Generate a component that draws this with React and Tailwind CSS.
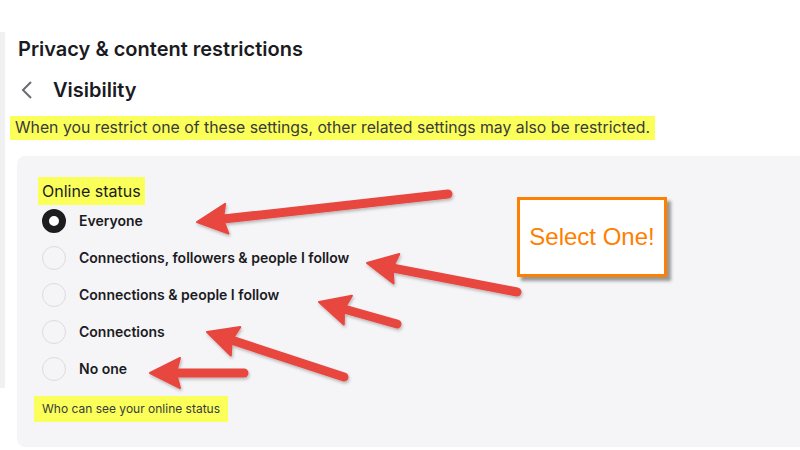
import React from "react";

const options = [
  "Everyone",
  "Connections, followers & people I follow",
  "Connections & people I follow",
  "Connections",
  "No one",
];

// annotation arrows: tail -> tip
const arrows = [
  { from: [448, 194], to: [197, 222] },
  { from: [517, 292], to: [367, 263] },
  { from: [397, 324], to: [319, 302] },
  { from: [344, 377], to: [207, 332] },
  { from: [244, 373], to: [150, 373] },
];

const Arrow = ({ from, to }) => {
  const [x1, y1] = from;
  const [x2, y2] = to;
  const len = Math.hypot(x2 - x1, y2 - y1);
  const ux = (x2 - x1) / len;
  const uy = (y2 - y1) / len;
  const head = 30;
  const half = 15;
  const bx = x2 - ux * head;
  const by = y2 - uy * head;
  const px = -uy;
  const py = ux;
  const pts = [
    [x2, y2],
    [bx + px * half, by + py * half],
    [bx + ux * 4, by + uy * 4],
    [bx - px * half, by - py * half],
  ]
    .map((p) => p.join(","))
    .join(" ");
  return (
    <g>
      <line
        x1={x1}
        y1={y1}
        x2={bx + ux * 6}
        y2={by + uy * 6}
        stroke="#e8463f"
        strokeWidth="9"
        strokeLinecap="round"
      />
      <polygon points={pts} fill="#e8463f" strokeLinejoin="round" stroke="#e8463f" strokeWidth="2" />
    </g>
  );
};

const Radio = ({ checked }) =>
  checked ? (
    <span className="w-[24px] h-[24px] rounded-full border-[7px] border-[#1d1d20] bg-white shrink-0" />
  ) : (
    <span className="w-[24px] h-[24px] rounded-full border-[1.5px] border-[#dcdce0] shrink-0" />
  );

export default function App() {
  return (
    <div
      className="relative w-[800px] h-[450px] bg-white overflow-hidden flex"
      style={{ fontFamily: "Inter, 'Open Sans', sans-serif" }}
    >
      <div className="mt-[32px] h-[356px] w-[5px] bg-[#f1f1f3] shrink-0" />

      <div className="flex flex-col pl-[13px] pt-[36px] flex-1">
        <h1 className="text-[20px] leading-[26px] font-semibold text-[#1b1b1f]">
          Privacy &amp; content restrictions
        </h1>

        <div className="mt-[15px] h-[26px] flex items-center">
          <svg width="16" height="20" viewBox="0 0 16 20" className="ml-[1px]">
            <path d="M12 2 L4 10 L12 18" fill="none" stroke="#6b6b70" strokeWidth="2" />
          </svg>
          <span className="ml-[18px] text-[20px] font-semibold text-[#1b1b1f]">Visibility</span>
        </div>

        <div className="mt-[13px] -ml-[8px] self-start h-[24px] bg-[#faff5a] px-[5px] flex items-center text-[15.8px] text-[#3a3a3a]">
          When you restrict one of these settings, other related settings may also be restricted.
        </div>

        <div className="mt-[16px] -ml-[1px] mr-[-20px] flex-1 bg-[#f5f5f7] rounded-tl-[8px] rounded-bl-[8px] mb-[3px] pt-[21px] pl-[21px]">
          <div className="self-start inline-flex h-[28px] items-center bg-[#faff5a] px-[4px] text-[16px] text-[#1b1b1f]">
            Online status
          </div>

          <div className="flex flex-col -mt-[3px]">
            {options.map((o, i) => (
              <label key={o} className="h-[37px] flex items-center gap-[13px] pl-[4px]">
                <Radio checked={i === 0} />
                <span className="text-[14px] font-semibold text-[#1b1b1f]">{o}</span>
              </label>
            ))}
          </div>

          <div className="mt-[9px] -ml-[4px] inline-flex h-[26px] items-center bg-[#faff5a] px-[8px] text-[12px] text-[#3a3a3a]">
            Who can see your online status
          </div>
        </div>
      </div>

      <svg className="absolute inset-0 pointer-events-none" width="800" height="450">
        <defs>
          <filter id="sh" x="-10%" y="-10%" width="120%" height="130%">
            <feDropShadow dx="1" dy="2" stdDeviation="1.5" floodColor="#000" floodOpacity="0.25" />
          </filter>
        </defs>
        <g filter="url(#sh)">
          {arrows.map((a, i) => (
            <Arrow key={i} {...a} />
          ))}
        </g>
      </svg>

      <div className="absolute left-[517px] top-[197px] w-[150px] h-[80px] bg-white border-[3px] border-[#ff8000] shadow-[4px_4px_3px_rgba(90,90,90,0.6)] flex items-center justify-center">
        <span
          className="text-[24px] text-[#ff8000]"
          style={{ fontFamily: "'Liberation Sans', Arial, sans-serif" }}
        >
          Select One!
        </span>
      </div>
    </div>
  );
}
